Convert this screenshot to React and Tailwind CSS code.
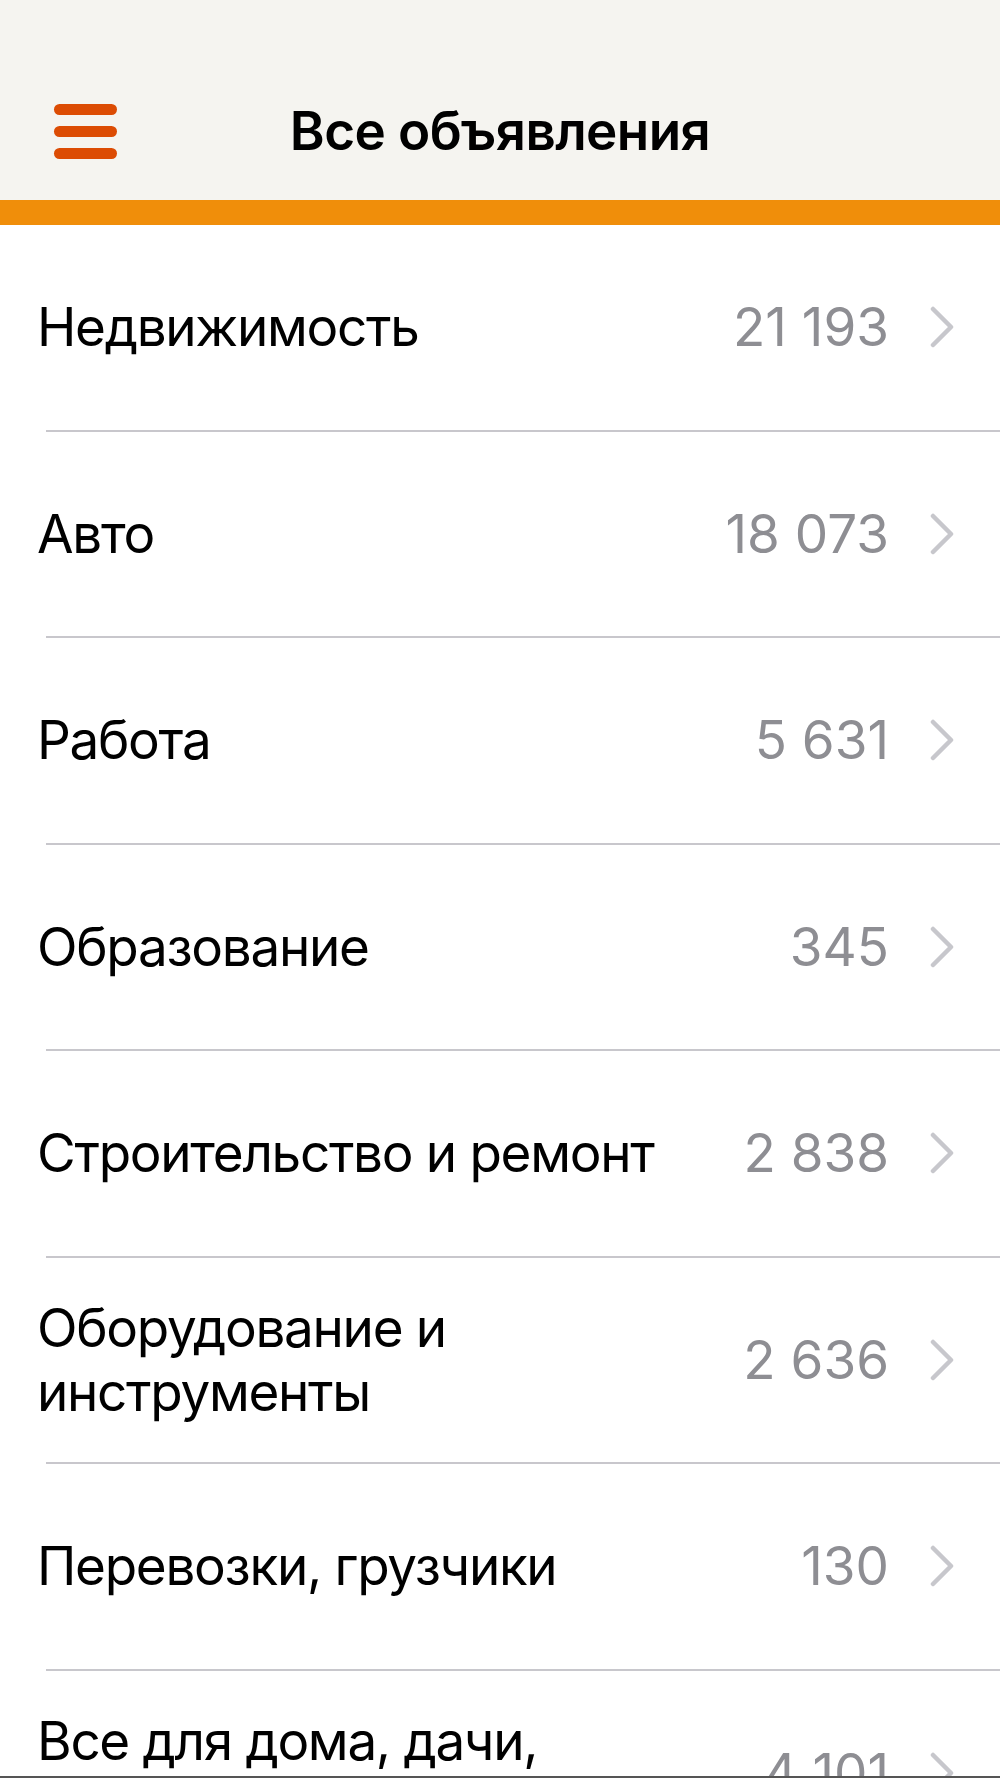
import React from 'react';

const categories = [
  { id: 1, name: 'Недвижимость', count: '21 193' },
  { id: 2, name: 'Авто', count: '18 073' },
  { id: 3, name: 'Работа', count: '5 631' },
  { id: 4, name: 'Образование', count: '345' },
  { id: 5, name: 'Строительство и ремонт', count: '2 838' },
  { id: 6, name: ['Оборудование и', 'инструменты'], count: '2 636' },
  { id: 7, name: 'Перевозки, грузчики', count: '130' },
  { id: 8, name: ['Все для дома, дачи,', 'сада'], count: '4 101' },
];

const Chevron = () => (
  <svg width="26" height="42" viewBox="0 0 26 42" fill="none" className="shrink-0">
    <path d="M4 3 L22 21 L4 39" stroke="#c7c7cc" strokeWidth="4.5" strokeLinecap="round" strokeLinejoin="round" />
  </svg>
);

const CategoryRow = ({ item }) => {
  const lines = Array.isArray(item.name) ? item.name : [item.name];
  return (
    <div className="shrink-0">
      <div className="h-[204.5px] flex items-center pl-[37px] pr-[45px]">
        <div className="flex-1 min-w-0 text-[53px] leading-[64px] tracking-[-1.3px] text-black">
          {lines.map((l) => (
            <div key={l} className="whitespace-nowrap">{l}</div>
          ))}
        </div>
        <span className="text-[53px] leading-[64px] text-[#8e8e93] mr-[40px] whitespace-nowrap">{item.count}</span>
        <Chevron />
      </div>
      <div className="ml-[46px] h-[2px] bg-[#c8c7cc]" />
    </div>
  );
};

const App = () => {
  return (
    <div
      className="w-[1000px] h-[1778px] flex flex-col overflow-hidden bg-white"
      style={{ fontFamily: 'Inter, "Noto Sans", sans-serif' }}
    >
      {/* nav bar */}
      <div className="h-[200px] shrink-0 bg-[#f5f4f0] flex flex-col">
        <div className="h-[62px]" />
        <div className="flex-1 relative flex items-center justify-center">
          <button className="absolute left-[54px] top-[42px] flex flex-col gap-[11px]">
            <span className="block w-[63px] h-[11px] rounded-full bg-[#dc4c04]" />
            <span className="block w-[63px] h-[11px] rounded-full bg-[#dc4c04]" />
            <span className="block w-[63px] h-[11px] rounded-full bg-[#dc4c04]" />
          </button>
          <h1 className="text-[53px] font-semibold tracking-[-0.6px] text-black leading-none">Все объявления</h1>
        </div>
      </div>
      <div className="h-[25px] shrink-0 bg-[#f08e0a]" />

      <div className="flex-1 flex flex-col overflow-hidden">
        {categories.map((c) => (
          <CategoryRow key={c.id} item={c} />
        ))}
      </div>
      <div className="h-[2px] shrink-0 bg-[#555555]" />
    </div>
  );
};

export default App;
